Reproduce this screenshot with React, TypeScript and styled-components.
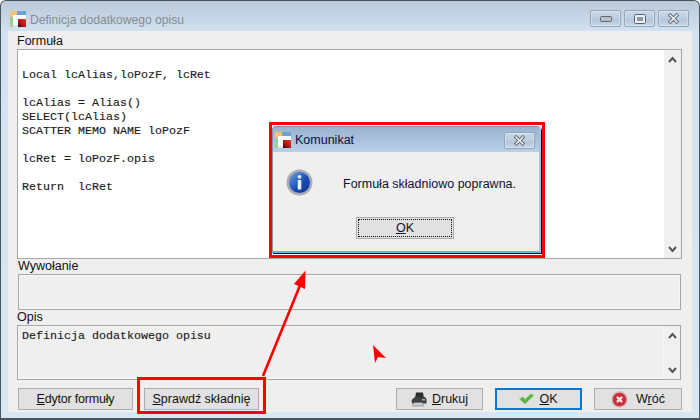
import React from "react";
import styled, { createGlobalStyle } from "styled-components";

const Global = createGlobalStyle`
  html, body { margin: 0; padding: 0; background: #fff; }
  body { font-family: "Liberation Sans", Arial, sans-serif; font-size: 12px; color: #111; }
`;

const Window = styled.div`
  position: relative;
  width: 700px;
  height: 420px;
  box-sizing: border-box;
  border: 1px solid #4d535b;
  border-bottom-width: 2px;
  border-radius: 6px 6px 0 0;
  background: linear-gradient(180deg, #b9c9da 0, #c4d4e5 14px, #d3e1f0 31px, #d9e6f3 100%);
  display: flex;
  flex-direction: column;
  overflow: hidden;
`;

const TitleBar = styled.div`
  height: 30px;
  flex: none;
  display: flex;
  align-items: center;
  padding: 6px 10px 0 9px;
  box-sizing: border-box;
`;

const TitleText = styled.span`
  margin-left: 4px;
  color: #858b92;
  font-size: 12.1px;
  flex: 1;
  padding-top: 1px;
`;

const CaptionGroup = styled.div`
  display: flex;
  gap: 3px;
  margin-top: -1px;
`;

const CaptionButton = styled.div`
  width: 31px;
  height: 17px;
  box-sizing: border-box;
  border: 1px solid #92a5ba;
  border-radius: 2px;
  background: linear-gradient(180deg, #c9d8e7 0, #bccdde 50%, #b3c6d9 55%, #c6d6e6 100%);
  box-shadow: inset 0 0 0 1px rgba(255, 255, 255, 0.35);
  display: flex;
  align-items: center;
  justify-content: center;
`;

const Content = styled.div`
  flex: none;
  margin: 0 7px;
  height: 381px;
  background: #efefef;
  padding: 0 10px 0 9px;
  display: flex;
  flex-direction: column;
  box-sizing: border-box;
`;

const FieldLabel = styled.div<{ $indent?: number }>`
  height: 15px;
  line-height: 15px;
  padding-left: ${(p) => p.$indent ?? 0}px;
  font-size: 12.5px;
  color: #111;
`;

const FirstLabel = styled(FieldLabel)`
  margin-top: 3px;
`;

const Field = styled.div<{ $h: number; $white?: boolean; $inset?: number; $right?: number }>`
  height: ${(p) => p.$h}px;
  flex: none;
  box-sizing: border-box;
  margin-left: ${(p) => p.$inset ?? 0}px;
  margin-right: ${(p) => p.$right ?? 0}px;
  border: 1px solid #a6a6a6;
  background: ${(p) => (p.$white ? "#fff" : "#efefef")};
  display: flex;
  box-shadow: inset 0 0 0 1px ${(p) => (p.$white ? "#fff" : "#f6f6f6")};
`;

const Code = styled.pre`
  flex: 1;
  margin: 0;
  padding: 4px 0 0 4px;
  font-family: "Liberation Mono", "Courier New", monospace;
  font-size: 11.67px;
  line-height: 14px;
  color: #1a1a1a;
  -webkit-text-stroke: 0.15px #1a1a1a;
`;

const NoteCode = styled(Code)`
  padding-top: 3px;
`;

const ScrollColumn = styled.div<{ $light?: boolean }>`
  width: 17px;
  flex: none;
  background: #f0f0f0;
  border-left: ${(p) => (p.$light ? "1px solid #fafafa" : "0")};
  display: flex;
  flex-direction: column;
  justify-content: space-between;
  align-items: center;
  padding: 6px 0 5px;
  box-sizing: border-box;
`;

const Footer = styled.div`
  height: 33px;
  display: flex;
  align-items: flex-start;
  padding: 8px 0 0 1px;
  box-sizing: border-box;
`;

const Button = styled.div<{ $w: number; $gap?: number; $default?: boolean; $iconGap?: number }>`
  width: ${(p) => p.$w}px;
  height: 22px;
  margin-left: ${(p) => p.$gap ?? 0}px;
  box-sizing: border-box;
  border: ${(p) => (p.$default ? "2px solid #0078d7" : "1px solid #adadad")};
  background: #e1e1e1;
  display: flex;
  align-items: center;
  justify-content: center;
  gap: ${(p) => p.$iconGap ?? 5}px;
  font-size: 12.5px;
  color: #111;
`;

const TightLabel = styled.span`
  letter-spacing: -0.2px;
`;

const Spacer = styled.div`
  flex: 1;
`;

const Dialog = styled.div`
  position: absolute;
  left: 271px;
  top: 125px;
  width: 269px;
  height: 127px;
  box-sizing: border-box;
  border: 1px solid #7f93ab;
  border-right: 2px solid #8fd0e6;
  border-bottom: 2px solid #4fbfdc;
  border-radius: 4px 4px 0 0;
  background: linear-gradient(180deg, #99b2ce 0, #b9d0ea 25px, #efefef 25px);
  display: flex;
  flex-direction: column;
  box-shadow: 1px 1px 0 #111, 2px 2px 0 #fff, -1px -1px 0 #fff;
`;

const DialogTitle = styled.div`
  height: 25px;
  flex: none;
  display: flex;
  align-items: center;
  padding: 1px 4px 0 2px;
  box-sizing: border-box;
  gap: 4px;
  font-size: 12.5px;
  color: #101030;
`;

const DialogCaption = styled.span`
  flex: 1;
`;

const DialogBody = styled.div`
  flex: 1;
  padding: 17px 0 0 13px;
  display: flex;
  flex-direction: column;
`;

const MessageRow = styled.div`
  display: flex;
  align-items: center;
  gap: 30px;
`;

const Message = styled.span`
  font-size: 12.5px;
  color: #101030;
  padding-top: 3px;
`;

const DialogOk = styled.div`
  align-self: flex-start;
  margin: 21px 0 0 70px;
  width: 98px;
  height: 22px;
  box-sizing: border-box;
  border: 1px solid #adadad;
  background: #e1e1e1;
  padding: 1px;
  font-size: 12.5px;
  color: #101030;
`;

const FocusRing = styled.div`
  height: 100%;
  box-sizing: border-box;
  border: 1px dotted #111;
  display: flex;
  align-items: center;
  justify-content: center;
`;

const Highlight = styled.div<{ $x: number; $y: number; $w: number; $h: number }>`
  position: absolute;
  left: ${(p) => p.$x}px;
  top: ${(p) => p.$y}px;
  width: ${(p) => p.$w}px;
  height: ${(p) => p.$h}px;
  box-sizing: border-box;
  border: 3px solid #ff0000;
  pointer-events: none;
`;

const Annotations = styled.svg`
  position: absolute;
  left: -1px;
  top: -1px;
`;

const AppIcon = ({ id }: { id: string }) => (
  <svg width="16" height="16" viewBox="0 0 16 16">
    <defs>
      <linearGradient id={id} x1="1" y1="0" x2="0" y2="1">
        <stop offset="0" stopColor="#e23a3a" />
        <stop offset="0.6" stopColor="#b01212" />
        <stop offset="1" stopColor="#2e0505" />
      </linearGradient>
    </defs>
    <rect x="0" y="0" width="7" height="6" fill="#fdbf73" />
    <rect x="7" y="0" width="9" height="4" fill="#6da2d8" />
    <rect x="0" y="6" width="3" height="10" fill="#95d58a" />
    <rect x="3" y="4" width="13" height="12" fill="#fff" />
    <rect x="8" y="8" width="8" height="8" fill={`url(#${id})`} />
    <rect x="3" y="14" width="5" height="2" fill="#e6e6e6" />
  </svg>
);

const CloseGlyph = () => (
  <svg width="13" height="11" viewBox="0 0 13 11">
    <path d="M2 1 L11 10 M11 1 L2 10" stroke="#59636e" strokeWidth="3.4" />
    <path d="M2.5 1.5 L10.5 9.5 M10.5 1.5 L2.5 9.5" stroke="#f3f6f9" strokeWidth="1.6" />
  </svg>
);

const Chevron = ({ up }: { up?: boolean }) => (
  <svg width="9" height="7" viewBox="0 0 9 7">
    <path d={up ? "M1 6 L4.5 2 L8 6" : "M1 1 L4.5 5 L8 1"} fill="none" stroke="#555" strokeWidth="2" />
  </svg>
);

const InfoIcon = () => (
  <svg width="27" height="27" viewBox="0 0 27 27">
    <defs>
      <linearGradient id="infoBlue" x1="0" y1="0" x2="1" y2="1">
        <stop offset="0" stopColor="#6f9fe4" />
        <stop offset="0.55" stopColor="#1a4fb8" />
        <stop offset="1" stopColor="#0b2f8a" />
      </linearGradient>
    </defs>
    <circle cx="13.5" cy="13.5" r="13" fill="#a9adb3" />
    <circle cx="13.5" cy="13.5" r="10.5" fill="url(#infoBlue)" />
    <circle cx="13.5" cy="7.8" r="1.9" fill="#e6eefa" />
    <rect x="11.7" y="11" width="3.6" height="9.5" rx="0.6" fill="#e6eefa" />
  </svg>
);

const PrinterIcon = () => (
  <svg width="16" height="15" viewBox="0 0 16 15">
    <path d="M5 0.5 H12 L13 6 H4 Z" fill="#2c2c2c" />
    <path d="M0.5 8 L4 5 H14 L15.5 7 V11.5 H1 Z" fill="#3c3f42" />
    <path d="M3 10.5 H11.5 L12.5 14 H1.5 Z" fill="#c9ccce" stroke="#666" strokeWidth="0.5" />
    <rect x="11" y="7" width="3" height="1.5" fill="#9fb4bc" />
  </svg>
);

const CheckIcon = () => (
  <svg width="15" height="12" viewBox="0 0 15 12">
    <path d="M0.5 6 L3.5 3.8 L6 6.2 L12 0.8 L14.8 2.5 L6 11.2 Z" fill="#58b544" stroke="#96dc84" strokeWidth="0.6" />
  </svg>
);

const DeleteIcon = () => (
  <svg width="17" height="17" viewBox="0 0 17 17">
    <circle cx="8.5" cy="8.5" r="8.2" fill="#c9bcbc" />
    <circle cx="8.5" cy="8.5" r="6.8" fill="#d12a38" />
    <path d="M5.9 5.9 L11.1 11.1 M11.1 5.9 L5.9 11.1" stroke="#f6e6e6" strokeWidth="2.2" />
  </svg>
);

const Key = styled.span`
  text-decoration: underline;
`;

const code = `
Local lcAlias,loPozF, lcRet

lcAlias = Alias()
SELECT(lcAlias)
SCATTER MEMO NAME loPozF

lcRet = loPozF.opis

Return  lcRet`;

export default function App() {
  return (
    <>
      <Global />
      <Window>
        <TitleBar>
          <AppIcon id="appRedMain" />
          <TitleText>Definicja dodatkowego opisu</TitleText>
          <CaptionGroup>
            <CaptionButton>
              <svg width="12" height="6" viewBox="0 0 12 6">
                <rect x="0.5" y="0.5" width="11" height="5" rx="1" fill="#b7c0c9" stroke="#5e6872" />
              </svg>
            </CaptionButton>
            <CaptionButton>
              <svg width="12" height="10" viewBox="0 0 12 10">
                <rect x="0.5" y="0.5" width="11" height="9" rx="1" fill="#e8eef4" stroke="#59636e" />
                <rect x="3" y="3" width="6" height="4" fill="#8d99a6" />
              </svg>
            </CaptionButton>
            <CaptionButton>
              <CloseGlyph />
            </CaptionButton>
          </CaptionGroup>
        </TitleBar>
        <Content>
          <FirstLabel>Formuła</FirstLabel>
          <Field $h={210} $white>
            <Code>{code}</Code>
            <ScrollColumn>
              <Chevron up />
              <Chevron />
            </ScrollColumn>
          </Field>
          <FieldLabel $indent={1}>Wywołanie</FieldLabel>
          <Field $h={36} $inset={1} $right={1} />
          <FieldLabel>Opis</FieldLabel>
          <Field $h={55} $right={1}>
            <NoteCode>Definicja dodatkowego opisu</NoteCode>
            <ScrollColumn $light>
              <Chevron up />
              <Chevron />
            </ScrollColumn>
          </Field>
          <Footer>
            <Button $w={115}>
              <TightLabel><Key>E</Key>dytor formuły</TightLabel>
            </Button>
            <Button $w={115} $gap={11}>
              <span><Key>S</Key>prawdź składnię</span>
            </Button>
            <Spacer />
            <Button $w={87}>
              <PrinterIcon />
              <span><Key>D</Key>rukuj</span>
            </Button>
            <Button $w={87} $gap={12} $default>
              <CheckIcon />
              <span><Key>O</Key>K</span>
            </Button>
            <Button $w={88} $gap={12} $iconGap={8}>
              <DeleteIcon />
              <span>W<Key>r</Key>óć</span>
            </Button>
          </Footer>
        </Content>
        <Dialog>
          <DialogTitle>
            <AppIcon id="appRedDialog" />
            <DialogCaption>Komunikat</DialogCaption>
            <CaptionButton>
              <CloseGlyph />
            </CaptionButton>
          </DialogTitle>
          <DialogBody>
            <MessageRow>
              <InfoIcon />
              <Message>Formuła składniowo poprawna.</Message>
            </MessageRow>
            <DialogOk>
              <FocusRing>
                <span><Key>O</Key>K</span>
              </FocusRing>
            </DialogOk>
          </DialogBody>
        </Dialog>
        <Highlight $x={268} $y={121} $w={276} $h={136} />
        <Highlight $x={136} $y={376} $w={129} $h={37} />
        <Annotations width="700" height="420" viewBox="0 0 700 420">
          <line x1="263" y1="376" x2="301" y2="283" stroke="#ff0000" strokeWidth="2.6" />
          <polygon points="305.5,270.5 294,284 305,289" fill="#ff0000" />
          <polygon points="373,345 386,358 378,357 375,363" fill="#ff0000" />
        </Annotations>
      </Window>
    </>
  );
}
